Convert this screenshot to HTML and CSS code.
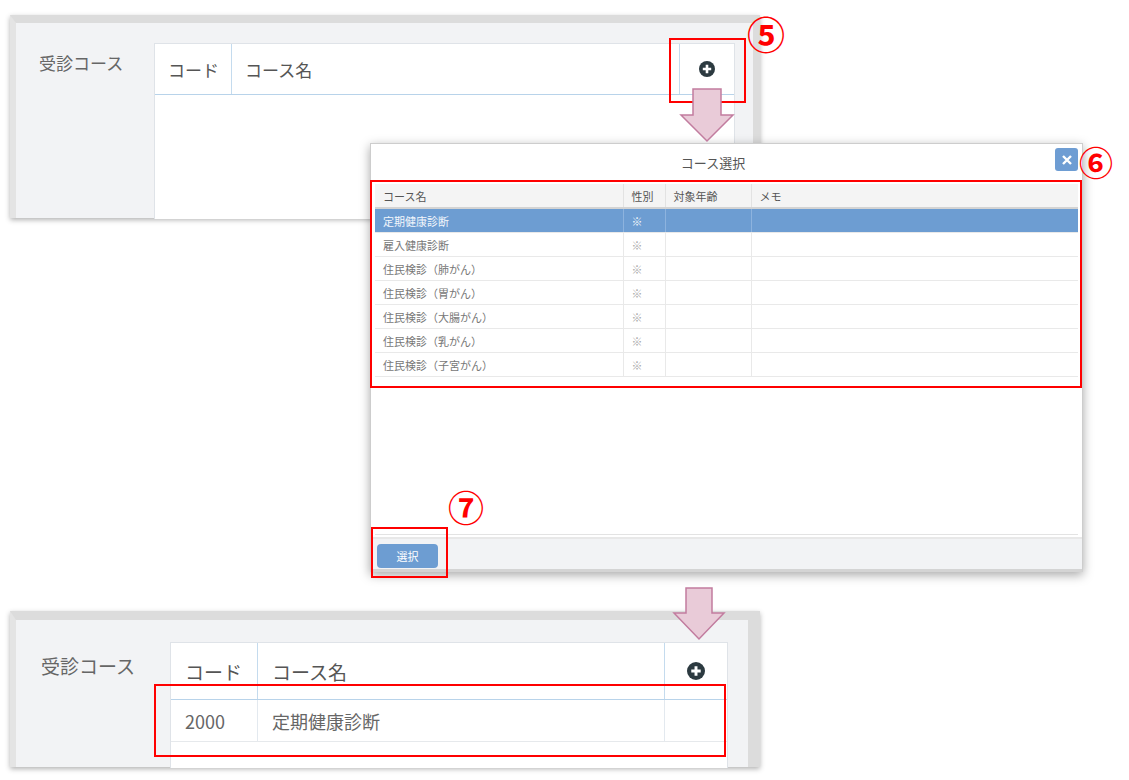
FILE: index.html
```html
<!DOCTYPE html>
<html lang="ja">
<head>
    <meta charset="UTF-8">
    <meta name="viewport" content="width=device-width, initial-scale=1.0">
    <title>コース選択</title>
    <link rel="stylesheet" href="styles.css">
</head>
<body>
<div class="canvas">

    <!-- before: empty course list -->
    <section class="panel panel-before">
        <div class="field-label">受診コース</div>
        <div class="course-table">
            <div class="course-head">
                <div class="cell">コード</div>
                <div class="cell">コース名</div>
                <div class="cell cell-add">
                    <svg class="add-icon" viewBox="0 0 16 16" width="16" height="16">
                        <circle cx="8" cy="8" r="8" fill="#2c3a40"/>
                        <path d="M8 3.8v8.4M3.8 8h8.4" stroke="#fff" stroke-width="2.6"/>
                    </svg>
                </div>
            </div>
            <div class="course-empty"></div>
        </div>
    </section>

    <!-- after: selected course added -->
    <section class="panel panel-after">
        <div class="field-label">受診コース</div>
        <div class="course-table">
            <div class="course-head">
                <div class="cell">コード</div>
                <div class="cell">コース名</div>
                <div class="cell cell-add">
                    <svg class="add-icon" viewBox="0 0 16 16" width="18" height="18">
                        <circle cx="8" cy="8" r="8" fill="#2c3a40"/>
                        <path d="M8 3.8v8.4M3.8 8h8.4" stroke="#fff" stroke-width="2.6"/>
                    </svg>
                </div>
            </div>
            <div class="course-row">
                <div class="cell">2000</div>
                <div class="cell">定期健康診断</div>
                <div class="cell"></div>
            </div>
            <div class="course-empty"></div>
        </div>
    </section>

    <!-- course picker dialog -->
    <div class="dialog">
        <div class="dialog-head">
            <div class="dialog-title">コース選択</div>
            <div class="dialog-close">
                <svg viewBox="0 0 12 12" width="12" height="12">
                    <path d="M2 2l8 8M10 2l-8 8" stroke="#fff" stroke-width="2.4"/>
                </svg>
            </div>
        </div>
        <table class="pick-table">
            <colgroup>
                <col class="col-name">
                <col class="col-sex">
                <col class="col-age">
                <col>
            </colgroup>
            <thead>
                <tr>
                    <th>コース名</th>
                    <th>性別</th>
                    <th>対象年齢</th>
                    <th>メモ</th>
                </tr>
            </thead>
            <tbody>
                <tr class="selected"><td>定期健康診断</td><td class="mark-cell">※</td><td></td><td></td></tr>
                <tr><td>雇入健康診断</td><td class="mark-cell">※</td><td></td><td></td></tr>
                <tr><td>住民検診（肺がん）</td><td class="mark-cell">※</td><td></td><td></td></tr>
                <tr><td>住民検診（胃がん）</td><td class="mark-cell">※</td><td></td><td></td></tr>
                <tr><td>住民検診（大腸がん）</td><td class="mark-cell">※</td><td></td><td></td></tr>
                <tr><td>住民検診（乳がん）</td><td class="mark-cell">※</td><td></td><td></td></tr>
                <tr><td>住民検診（子宮がん）</td><td class="mark-cell">※</td><td></td><td></td></tr>
            </tbody>
        </table>
        <div class="dialog-space"></div>
        <div class="dialog-foot">
            <div class="btn-select">選択</div>
        </div>
    </div>

    <!-- annotations -->
    <div class="frame frame-add"></div>
    <div class="frame frame-list"></div>
    <div class="frame frame-btn"></div>
    <div class="frame frame-result"></div>

    <span class="step step-5">⑤</span>
    <span class="step step-6">⑥</span>
    <span class="step step-7">⑦</span>

    <svg class="arrow arrow-1" viewBox="0 0 54 54" width="54" height="54">
        <polygon points="13,1 41,1 41,27 53,27 27,53 1,27 13,27" fill="#e9cbd8" stroke="#c27c9f" stroke-width="1.5"/>
    </svg>
    <svg class="arrow arrow-2" viewBox="0 0 54 54" width="54" height="54">
        <polygon points="14,1 40,1 40,26 52,26 27,52 2,26 14,26" fill="#e9cbd8" stroke="#c27c9f" stroke-width="1.5"/>
    </svg>

</div>
</body>
</html>
```

FILE: styles.css
```css
/* page */
body {
    margin: 0;
    background: #fff;
    font-family: "Noto Sans CJK JP", "Noto Sans", sans-serif;
}

.canvas {
    position: relative;
    width: 1129px;
    height: 780px;
    overflow: hidden;
    background: #fff;
}

/* screenshot panels */
.panel {
    position: absolute;
    box-sizing: border-box;
    display: grid;
    align-items: start;
    background: #f2f3f5;
    border-top: 8px solid #dcdcdc;
    border-left: 6px solid #e4e4e4;
    border-right: 7px solid #dcdcdc;
    box-shadow: 0 2px 5px rgba(0, 0, 0, 0.3);
}

.panel-before {
    left: 10px;
    top: 15px;
    width: 750px;
    height: 203px;
    grid-template-columns: 138px 1fr;
    padding: 20px 18px 0 0;
}

.panel-after {
    left: 10px;
    top: 611px;
    width: 750px;
    height: 156px;
    border-top-width: 9px;
    border-right-width: 12px;
    grid-template-columns: 154px 1fr;
    padding: 22px 20px 0 0;
}

.field-label {
    color: #666;
    font-size: 17px;
    line-height: 24px;
    padding: 8px 0 0 23px;
}

.panel-after .field-label {
    font-size: 19px;
    line-height: 26px;
    padding: 11px 0 0 25px;
}

.course-table {
    height: 100%;
    display: flex;
    flex-direction: column;
    background: #fff;
    border: 1px solid #dfe3e8;
    border-bottom: none;
}

.course-head {
    display: grid;
    grid-template-columns: 77px 448px 1fr;
    height: 50px;
    border-bottom: 1px solid #b8d3ea;
}

.panel-after .course-head {
    grid-template-columns: 87px 407px 1fr;
    height: 56px;
}

.cell {
    display: flex;
    align-items: center;
    padding-left: 13px;
    border-right: 1px solid #c4dbee;
    color: #555;
    font-size: 17px;
}

.panel-after .cell {
    padding-left: 14px;
    font-size: 19px;
}

.cell:last-child {
    border-right: none;
}

.cell-add {
    justify-content: center;
    padding-left: 0 !important;
}

.course-row {
    display: grid;
    grid-template-columns: 87px 407px 1fr;
    height: 41px;
    border-bottom: 1px solid #e6e9ec;
}

.course-row .cell {
    border-right-color: #e3e9ef;
    color: #666;
}

.panel-after .course-row .cell {
    font-size: 18px;
}

.course-row .cell:last-child {
    border-right: none;
}

.course-empty {
    flex: 1;
}

/* dialog */
.dialog {
    position: absolute;
    left: 370px;
    top: 143px;
    width: 713px;
    height: 429px;
    box-sizing: border-box;
    display: flex;
    flex-direction: column;
    background: #fff;
    border: 1px solid #cdcdcd;
    border-bottom: 3px solid #d4d4d4;
    box-shadow: 0 3px 10px rgba(0, 0, 0, 0.35);
}

.dialog-head {
    display: flex;
    align-items: flex-start;
    height: 40px;
    box-sizing: border-box;
    padding: 4px 4px 0 0;
}

.dialog-title {
    flex: 1;
    text-align: center;
    line-height: 30px;
    font-size: 13px;
    color: #555;
}

.dialog-close {
    width: 23px;
    height: 23px;
    display: flex;
    align-items: center;
    justify-content: center;
    background: #6e9dd3;
    border-radius: 3px;
}

.pick-table {
    width: 703px;
    margin: 0 4px;
    border-collapse: collapse;
    table-layout: fixed;
    font-size: 11px;
}

.col-name { width: 248px; }
.col-sex { width: 42px; }
.col-age { width: 86px; }

.pick-table th {
    height: 23px;
    padding: 0 8px;
    text-align: left;
    font-weight: normal;
    color: #555;
    background: #f4f4f4;
    border-right: 1px solid #e2e2e2;
    border-bottom: 2px solid #d3d3d3;
}

.pick-table td {
    height: 23px;
    padding: 0 8px;
    color: #777;
    border-right: 1px solid #e9e9e9;
    border-bottom: 1px solid #e9e9e9;
    white-space: nowrap;
}

.pick-table th:last-child,
.pick-table td:last-child {
    border-right: none;
}

.pick-table .mark-cell {
    color: #aaa;
}

.pick-table tr.selected td {
    background: #6d9dd2;
    color: #f2f6fb;
    border-right-color: #8db3de;
}

.dialog-space {
    flex: 1;
    margin: 0 4px;
    border-bottom: 1px solid #e3e3e3;
}

.dialog-foot {
    margin-top: 2px;
    padding: 5px 6px;
    background: #f2f3f5;
    border-top: 2px solid #e8e8e8;
    flex: 0 0 auto;
    height: 32px;
    box-sizing: border-box;
}

.btn-select {
    width: 61px;
    height: 24px;
    line-height: 24px;
    text-align: center;
    font-size: 11px;
    color: #fff;
    background: #6d9dd2;
    border-radius: 4px;
}

/* annotations */
.frame {
    position: absolute;
    box-sizing: border-box;
    border: 2px solid #f00;
}

.frame-add { left: 669px; top: 38px; width: 77px; height: 65px; }
.frame-list { left: 370px; top: 180px; width: 712px; height: 208px; }
.frame-btn { left: 371px; top: 527px; width: 77px; height: 51px; }
.frame-result { left: 154px; top: 684px; width: 572px; height: 73px; }

.step {
    position: absolute;
    width: 40px;
    height: 40px;
    display: flex;
    align-items: center;
    justify-content: center;
    color: #f00;
    font-size: 38px;
    font-weight: 700;
    line-height: 1;
}

.step-5 { left: 746px; top: 13px; }
.step-6 { left: 1076px; top: 142px; font-size: 34px; }
.step-7 { left: 446px; top: 486px; font-size: 36px; }

.arrow {
    position: absolute;
    overflow: visible;
}

.arrow-1 { left: 680px; top: 88px; }
.arrow-2 { left: 672px; top: 587px; }
```
